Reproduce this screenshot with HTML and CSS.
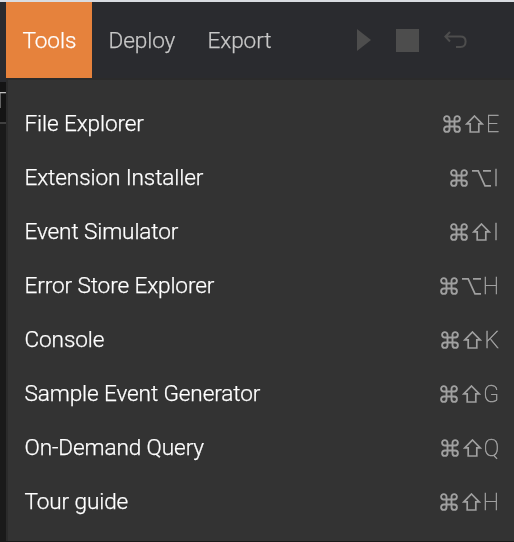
FILE: index.html
```html
<!DOCTYPE html>
<html lang="en">
<head>
<meta charset="utf-8">
<title>Tools</title>
<link rel="stylesheet" href="styles.css">
</head>
<body>
<svg class="defs" aria-hidden="true">
  <symbol id="cmd" viewBox="0 0 18 18"><path d="M6.5 6.5V3.8A2.7 2.7 0 1 0 3.8 6.5H14.2A2.7 2.7 0 1 0 11.5 3.8V14.2A2.7 2.7 0 1 0 14.2 11.5H3.8A2.7 2.7 0 1 0 6.5 14.2Z"/></symbol>
  <symbol id="shift" viewBox="0 0 19 18"><path d="M9.5 1L17.2 8.9H13.8V17H5.2V8.9H1.8Z"/></symbol>
  <symbol id="opt" viewBox="0 0 19 18"><path d="M0 1.9H6.2L13 16.9H19M11 1.9H19"/></symbol>
</svg>
<header class="menubar">
  <nav class="tabs">
    <span class="tab active">Tools</span>
    <span class="tab deploy">Deploy</span>
    <span class="tab export">Export</span>
  </nav>
  <div class="actions">
    <svg class="play" width="14" height="22" viewBox="0 0 14 22"><path d="M0 0L14 11L0 22Z"/></svg>
    <span class="stop"></span>
    <svg class="undo" width="23" height="18" viewBox="0 0 23 18"><path d="M6 1L1.4 5.6L6 10.5M1.4 5.6H16.5C20 5.6 21.6 7.5 21.6 10.5S20 16 16.5 16H12"/></svg>
  </div>
</header>
<main class="workspace"><div class="panel-title">T</div></main>
<ul class="dropdown">
  <li><span>File Explorer</span><kbd><svg class="key cmd"><use href="#cmd"/></svg><svg class="key"><use href="#shift"/></svg><b>E</b></kbd></li>
  <li><span>Extension Installer</span><kbd><svg class="key cmd"><use href="#cmd"/></svg><svg class="key"><use href="#opt"/></svg><b>I</b></kbd></li>
  <li><span>Event Simulator</span><kbd><svg class="key cmd"><use href="#cmd"/></svg><svg class="key"><use href="#shift"/></svg><b>I</b></kbd></li>
  <li><span>Error Store Explorer</span><kbd><svg class="key cmd"><use href="#cmd"/></svg><svg class="key"><use href="#opt"/></svg><b>H</b></kbd></li>
  <li><span>Console</span><kbd><svg class="key cmd"><use href="#cmd"/></svg><svg class="key"><use href="#shift"/></svg><b>K</b></kbd></li>
  <li><span>Sample Event Generator</span><kbd><svg class="key cmd"><use href="#cmd"/></svg><svg class="key"><use href="#shift"/></svg><b>G</b></kbd></li>
  <li><span>On-Demand Query</span><kbd><svg class="key cmd"><use href="#cmd"/></svg><svg class="key"><use href="#shift"/></svg><b>Q</b></kbd></li>
  <li><span>Tour guide</span><kbd><svg class="key cmd"><use href="#cmd"/></svg><svg class="key"><use href="#shift"/></svg><b>H</b></kbd></li>
</ul>
</body>
</html>
```
FILE: styles.css
```css
* { box-sizing: border-box; }
body {
  margin: 0;
  height: 542px;
  overflow: hidden;
  position: relative;
  background: #1a1a1a;
  font: 300 22.6px/30px Roboto, sans-serif;
}
.defs { position: absolute; width: 0; height: 0; }
.menubar {
  display: flex;
  height: 82px;
  padding-left: 6px;
  border-top: 2px solid #d9dce1;
  background: #2a2b2f;
  color: #c8c8c8;
}
.tabs { display: flex; height: 76px; width: 351px; letter-spacing: -.1px; will-change: transform; -webkit-text-stroke: .25px; }
.tab { padding: 24px 0 0 16.5px; width: 99px; }
.active { width: 86px; background: #e6823c; color: #fff; }
.export { width: 100px; }
.actions { display: flex; align-items: center; height: 76px; }
.play { fill: #4d4d4d; }
.stop { width: 23px; height: 23px; margin-left: 25px; background: #4d4d4d; }
.undo { margin-left: 25px; fill: none; stroke: #4d4d4d; stroke-width: 2; }
.workspace { width: 6px; overflow: hidden; will-change: transform; }
.panel-title {
  height: 42px;
  padding-top: 4px;
  margin-left: -7px;
  border-bottom: 2px solid #404040;
  background: #141414;
  color: #c0c0c0;
}
.dropdown {
  position: absolute;
  top: 78px;
  left: 6px;
  right: 0;
  height: 463px;
  margin: 0;
  padding: 17px 15px 0 16.5px;
  list-style: none;
  border: solid #2b2b2b;
  border-width: 2px 0 0 2px;
  background: #333;
  color: #fff;
  will-change: transform;
}
.dropdown li { display: flex; justify-content: space-between; align-items: center; height: 54px; }
.dropdown span { letter-spacing: -.12px; -webkit-text-stroke: .25px; }
kbd { display: flex; align-items: center; font: inherit; color: #a0a0a0; }
kbd b { padding-top: 1px; font-size: 23px; font-weight: 100; -webkit-text-stroke: .5px; }
.key { width: 19px; height: 18px; margin-right: 2px; fill: none; stroke: #a0a0a0; stroke-width: 1.7; }
.cmd { width: 18px; margin-right: 4px; stroke-width: 1.9; }
```
